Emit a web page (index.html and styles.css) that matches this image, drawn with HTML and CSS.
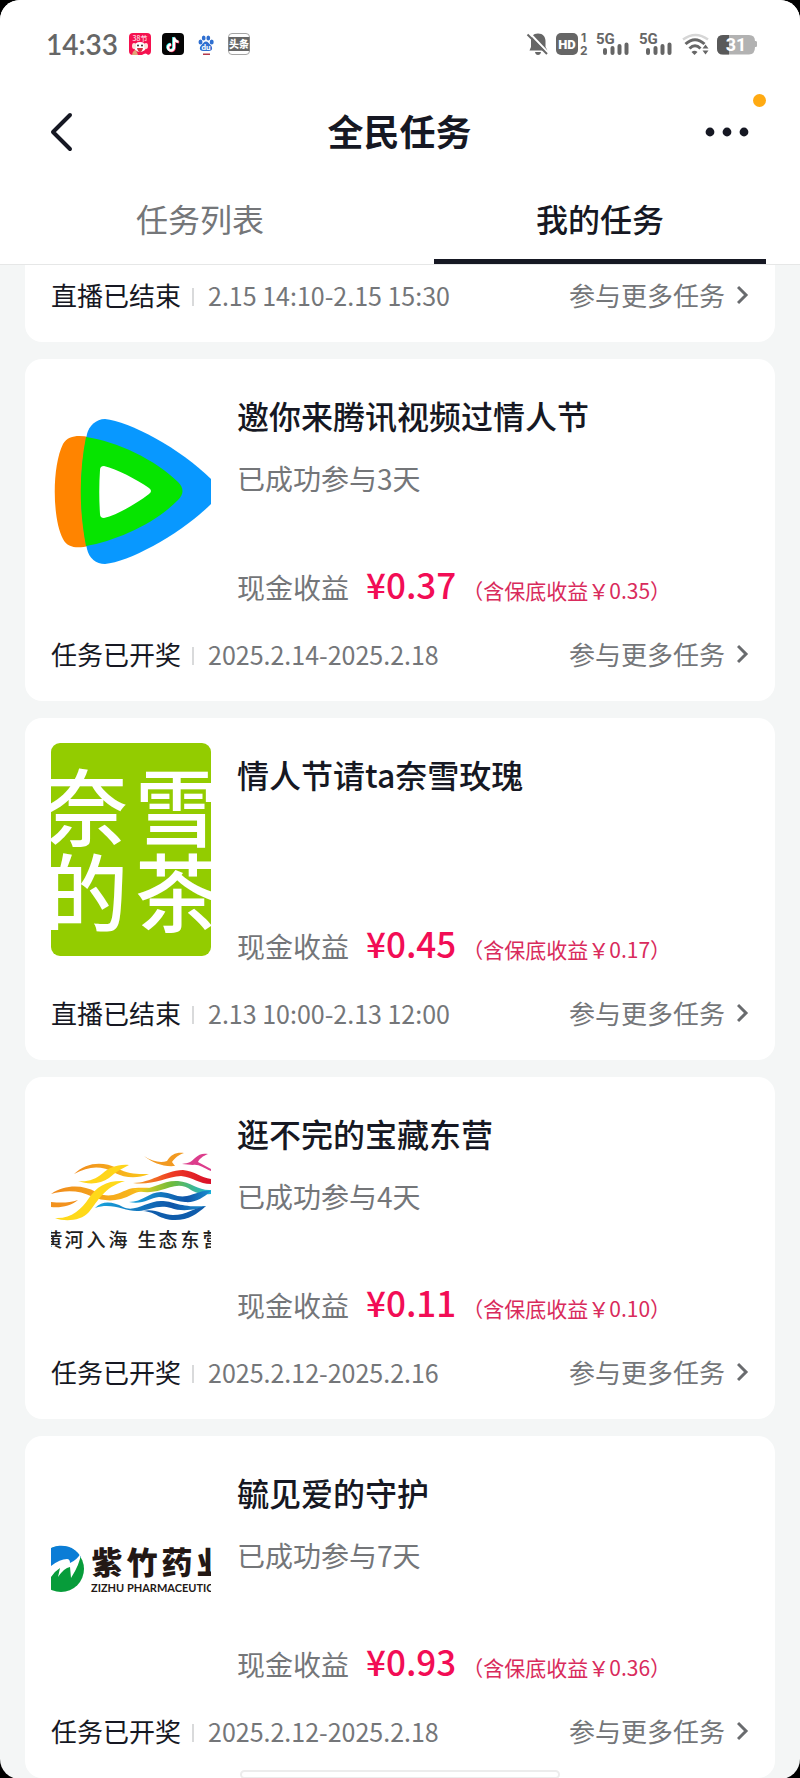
FILE: index.html
```html
<!DOCTYPE html>
<html lang="zh-CN">
<head>
<meta charset="utf-8">
<meta name="viewport" content="width=device-width, initial-scale=1">
<title>全民任务</title>
<link rel="stylesheet" href="styles.css">
</head>
<body>
<div class="screen">
  <header class="header">
    <div class="status">
      <div class="status-left">
        <time class="clock">14:33</time>
        <svg class="app-icon" viewBox="0 0 22 22" aria-hidden="true">
          <rect width="22" height="22" rx="4" fill="#f5114f"/>
          <text x="11" y="8" text-anchor="middle" class="promo-text">38节</text>
          <ellipse cx="11" cy="14" rx="6" ry="5" fill="#fff"/>
          <ellipse cx="5" cy="13" rx="2" ry="3" fill="#fbe3da"/>
          <ellipse cx="17" cy="13" rx="2" ry="3" fill="#fbe3da"/>
          <circle cx="9" cy="12.500" r="0.900" fill="#222"/><circle cx="13" cy="12.500" r="0.900" fill="#222"/>
          <path d="M8 15h6q-1 4-3 4t-3-4z" fill="#d3313c"/>
          <path d="M3 22q1-5 4-5l2 5z" fill="#e0a678"/><path d="M13 22q4-3 6 0z" fill="#fff"/>
        </svg>
        <svg class="app-icon" viewBox="0 0 22 22" aria-hidden="true">
          <rect width="22" height="22" rx="4" fill="#050505"/>
          <g fill="none" stroke-width="2.400">
            <path d="M11.300 4v10a3 3 0 1 1-3-3M11.300 4q.5 4 4.500 4.300" stroke="#25e4e0"/>
            <path d="M12.700 5v10a3 3 0 1 1-3-3M12.700 5q.5 4 4.500 4.300" stroke="#f22b55"/>
            <path d="M12 4.500v10a3 3 0 1 1-3-3M12 4.500q.5 4 4.500 4.300" stroke="#fff"/>
          </g>
        </svg>
        <svg class="app-icon" viewBox="0 0 22 22" aria-hidden="true">
          <g fill="#2f6fd0">
            <ellipse cx="5.500" cy="9" rx="2" ry="2.600"/><ellipse cx="8.700" cy="5" rx="1.900" ry="2.600"/>
            <ellipse cx="13.300" cy="5" rx="1.900" ry="2.600"/><ellipse cx="16.700" cy="9" rx="2" ry="2.600"/>
            <path d="M11 8.500c2 0 3 2 4.500 3.500 3 3 1.500 6-1.500 6H8c-3 0-4.500-3-1.500-6C8 10.500 9 8.500 11 8.500z"/>
          </g>
          <text x="11" y="16.500" text-anchor="middle" class="paw-text">du</text>
          <path d="M8 21.300h7" stroke="#b33a4a" stroke-width="1.400"/>
        </svg>
        <svg class="app-icon" viewBox="0 0 22 22" aria-hidden="true">
          <rect x="0.500" y="0.500" width="21" height="21" rx="3.500" fill="#fff" stroke="#a5a5a5"/>
          <rect x="0.500" y="4" width="21" height="14" fill="#666"/>
          <text x="11" y="15" text-anchor="middle" class="news-text">头条</text>
        </svg>
      </div>
      <div class="status-right">
        <svg class="sys-icon" width="22" height="24" viewBox="0 0 22 24" aria-hidden="true">
          <path d="M12 1.500c5 0 7.500 3.500 7.500 7.500v6l2 3.500H3.500L5 15V9c0-4 2-7.500 7-7.500z" fill="#666"/>
          <path d="M9 20h6q-.5 3-3 3t-3-3z" fill="#666"/>
          <path d="M3 .5l20 21" stroke="#fff" stroke-width="2"/>
          <path d="M1.500 2.500L21 22" stroke="#666" stroke-width="2"/>
        </svg>
        <svg class="sys-icon" width="32" height="24" viewBox="0 0 32 24" aria-hidden="true">
          <rect y="1" width="22" height="22" rx="5" fill="#666"/>
          <text x="11" y="17" text-anchor="middle" class="hd-text">HD</text>
          <text x="25" y="10" class="sim-text">1</text><text x="24" y="23" class="sim-text">2</text>
        </svg>
        <svg class="sys-icon" width="35" height="24" viewBox="0 0 35 24" aria-hidden="true">
          <text x="0" y="12" class="net-text">5G</text>
          <path d="M9 18v3M16.500 16v5M23.500 14v7M30.500 12.500v8.500" class="bars"/>
        </svg>
        <svg class="sys-icon" width="35" height="24" viewBox="0 0 35 24" aria-hidden="true">
          <text x="0" y="12" class="net-text">5G</text>
          <path d="M9 18v3M16.500 16v5M23.500 14v7M30.500 12.500v8.500" class="bars"/>
        </svg>
        <svg class="sys-icon" width="27" height="24" viewBox="0 0 27 24" aria-hidden="true">
          <g fill="none" stroke-width="2.500">
            <path d="M1 7.500q12.500-9 25 0" stroke="#d6d6d6"/>
            <path d="M3.500 12q9.500-8.500 19 0M7.500 16.500q5.500-5.500 11 0" stroke="#666" stroke-width="3"/>
          </g>
          <path d="M9.500 20q3-2.500 6 0l-3 3z" fill="#666"/>
          <path d="M23.500 12.500l3 4h-6zM23.500 22.500l3-4h-6z" fill="#666"/>
        </svg>
        <svg class="sys-icon" width="40" height="24" viewBox="0 0 40 24" aria-hidden="true">
          <path d="M6 3H32q6 0 6 6h1q1 0 1 1.500v3q0 1.500-1 1.500h-1q0 7.500-6 7.500H6q-6 0-6-6V9q0-6 6-6z" fill="#b2b2b2"/>
          <path d="M6 3h6v19.500H6q-6 0-6-6V9q0-6 6-6z" fill="#595959"/>
          <text x="19" y="19" text-anchor="middle" class="battery-text">31</text>
        </svg>
      </div>
    </div>

    <div class="titlebar">
      <button class="icon-button" type="button" aria-label="返回">
        <svg width="24" height="40" viewBox="0 0 24 40" aria-hidden="true"><path d="M20 3L3 20l17 17" fill="none" stroke="#161823" stroke-width="4" stroke-linecap="round" stroke-linejoin="round"/></svg>
      </button>
      <h1 class="page-title">全民任务</h1>
      <button class="icon-button more" type="button" aria-label="更多">
        <svg width="44" height="40" viewBox="0 0 44 40" fill="#161823" aria-hidden="true"><circle cx="5" cy="20" r="4.400"/><circle cx="22" cy="20" r="4.400"/><circle cx="39" cy="20" r="4.400"/></svg>
        <span class="dot"></span>
      </button>
    </div>

    <nav class="tabs">
      <a class="tab" href="#list">任务列表</a>
      <a class="tab active" href="#mine" aria-current="page">我的任务</a>
    </nav>
  </header>

  <main class="cards">
    <article class="card partial">
      <footer class="card-foot">
        <span class="state">直播已结束</span><span class="date">2.15 14:10-2.15 15:30</span>
        <a class="join" href="#more">参与更多任务<svg class="arrow" viewBox="0 0 12 20" aria-hidden="true"><path d="M1 2l8 8-8 8"/></svg></a>
      </footer>
    </article>

    <article class="card">
      <div class="card-body">
        <svg class="cover" viewBox="0 0 160 213" role="img" aria-label="腾讯视频">
          <path d="M38 53C28 51 17 51 12 60C1 82 1 134 12 155C17 165 28 164 38 162z" fill="#ff8400"/>
          <path d="M54 35C45 35 38 42 36 50C28 88 28 126 36 165C38 174 45 180 54 180C78 178 130 150 160 120V95C130 65 78 37 54 35z" fill="#0898ff"/>
          <path d="M35 53C65 57 105 76 127 98C133 104 133 110 127 116C105 139 65 157 35 162C28 126 28 88 35 53z" fill="#06e400"/>
          <path d="M53 82C66 85 85 95 98 104Q102 107 98 110C85 120 66 131 53 134Q49 134 49 130C48 115 48 100 49 86Q49 82 53 82z" fill="#fff"/>
        </svg>
        <div class="info">
          <h2 class="name">邀你来腾讯视频过情人节</h2>
          <p class="days">已成功参与3天</p>
          <p class="income"><span class="label">现金收益</span><strong class="amount">¥0.37</strong><span class="note">（含保底收益￥0.35）</span></p>
        </div>
      </div>
      <footer class="card-foot">
        <span class="state">任务已开奖</span><span class="date">2025.2.14-2025.2.18</span>
        <a class="join" href="#more">参与更多任务<svg class="arrow" viewBox="0 0 12 20" aria-hidden="true"><path d="M1 2l8 8-8 8"/></svg></a>
      </footer>
    </article>

    <article class="card">
      <div class="card-body">
        <svg class="cover" viewBox="0 0 160 213" role="img" aria-label="奈雪的茶">
          <rect width="160" height="213" fill="#93cc00"/>
          <g class="tea-text" text-anchor="middle">
            <text x="35" y="97">奈</text><text x="126" y="97">雪</text>
            <text x="35" y="182">的</text><text x="126" y="182">茶</text>
          </g>
        </svg>
        <div class="info">
          <h2 class="name">情人节请ta奈雪玫瑰</h2>
          <p class="income"><span class="label">现金收益</span><strong class="amount">¥0.45</strong><span class="note">（含保底收益￥0.17）</span></p>
        </div>
      </div>
      <footer class="card-foot">
        <span class="state">直播已结束</span><span class="date">2.13 10:00-2.13 12:00</span>
        <a class="join" href="#more">参与更多任务<svg class="arrow" viewBox="0 0 12 20" aria-hidden="true"><path d="M1 2l8 8-8 8"/></svg></a>
      </footer>
    </article>

    <article class="card">
      <div class="card-body">
        <svg class="cover" viewBox="0 0 160 213" role="img" aria-label="黄河入海 生态东营">
          <defs>
            <linearGradient id="red"><stop offset="0" stop-color="#f6a623"/><stop offset=".5" stop-color="#ee3a24"/><stop offset="1" stop-color="#d80f2a"/></linearGradient>
            <linearGradient id="green"><stop offset="0" stop-color="#ffd21c"/><stop offset=".5" stop-color="#6dbb3c"/><stop offset="1" stop-color="#17b5dc"/></linearGradient>
            <linearGradient id="blue"><stop offset="0" stop-color="#19a5dd"/><stop offset=".7" stop-color="#0f55a8"/><stop offset="1" stop-color="#1b8fd0"/></linearGradient>
            <linearGradient id="gold"><stop offset="0" stop-color="#f08a1d"/><stop offset="1" stop-color="#fbc81b"/></linearGradient>
          </defs>
          <path d="M23 72C35 60 52 59 66 66C78 73 88 72 98 72C86 77 74 76 64 71C50 63 38 64 23 72z" fill="url(#gold)"/>
          <path d="M78 63C66 62 58 66 52 71C44 78 36 80 27 79C38 83 50 82 58 76C65 70 70 67 78 63z" fill="#ffd51a"/>
          <path d="M0 92C15 82 32 83 45 90C58 97 66 92 78 87C90 84 105 88 115 84C100 92 92 87 82 92C66 101 52 99 42 95C28 88 15 88 0 92z" fill="url(#gold)"/>
          <path d="M74 79C56 78 46 84 38 96C30 108 20 117 4 116C14 120 30 119 38 110C48 98 52 86 74 79z" fill="#ffd91a"/>
          <path d="M0 100C10 101 18 101 27 98C20 104 10 106 0 105z" fill="#f2921f"/>
          <path d="M82 81C100 81 112 69 132 68C144 69 150 76 160 77V82C148 82 142 75 130 74C115 75 100 84 82 81z" fill="url(#red)"/>
          <path d="M82 87C100 90 110 78 127 79C140 80 148 89 160 88V92C150 93 146 91 140 88C130 80 120 85 110 88C100 91 90 91 82 87z" fill="url(#green)"/>
          <path d="M78 100C92 100 98 90 110 90C122 91 126 96 136 94C146 92 150 88 160 89C152 96 144 101 134 100C122 99 118 95 108 95C98 96 92 103 78 100z" fill="url(#blue)"/>
          <path d="M44 106C52 98 62 100 72 105C84 111 96 99 110 99C124 99 128 106 155 104C146 108 130 110 120 106C108 102 98 108 88 109C74 110 62 100 44 106z" fill="url(#blue)"/>
          <path d="M92 109C104 106 112 113 122 113C136 113 142 106 155 104C146 112 138 118 124 118C108 118 106 110 92 109z" fill="#0f5cab"/>
          <path d="M93 54C102 60 110 61 116 59C120 52 126 50 133 51C127 53 124 56 121 60L124 64C112 65 102 61 93 54z" fill="#f29a22"/>
          <path d="M131 62C138 61 140 60 144 56C148 52 152 51 157 52C152 54 148 57 147 60L160 67V69C152 66 148 62 142 63z" fill="#dc3d8c"/>
          <text class="river-text" text-anchor="middle"><tspan x="2" y="145">黄</tspan><tspan x="23">河</tspan><tspan x="45">入</tspan><tspan x="67">海</tspan><tspan x="96">生</tspan><tspan x="117">态</tspan><tspan x="139">东</tspan><tspan x="161">营</tspan></text>
        </svg>
        <div class="info">
          <h2 class="name">逛不完的宝藏东营</h2>
          <p class="days">已成功参与4天</p>
          <p class="income"><span class="label">现金收益</span><strong class="amount">¥0.11</strong><span class="note">（含保底收益￥0.10）</span></p>
        </div>
      </div>
      <footer class="card-foot">
        <span class="state">任务已开奖</span><span class="date">2025.2.12-2025.2.16</span>
        <a class="join" href="#more">参与更多任务<svg class="arrow" viewBox="0 0 12 20" aria-hidden="true"><path d="M1 2l8 8-8 8"/></svg></a>
      </footer>
    </article>

    <article class="card">
      <div class="card-body">
        <svg class="cover" viewBox="0 0 160 213" role="img" aria-label="紫竹药业">
          <circle cx="10" cy="108" r="23" fill="#079c3a"/>
          <path d="M0 87A23 23 0 0 1 30 96L18 104 0 106z" fill="#0b7dd6"/>
          <path d="M0 105Q9 98 16 98Q19 98 19 102Q26 99 30 92Q29 103 20 117L19 106Q13 107 7 116L9 107Q4 110 0 116z" fill="#fff"/>
          <text class="pharma-text" text-anchor="middle"><tspan x="56" y="113">紫</tspan><tspan x="91">竹</tspan><tspan x="126">药</tspan><tspan x="161">业</tspan></text>
          <text class="pharma-latin" x="40" y="131">ZIZHU PHARMACEUTICAL</text>
        </svg>
        <div class="info">
          <h2 class="name">毓见爱的守护</h2>
          <p class="days">已成功参与7天</p>
          <p class="income"><span class="label">现金收益</span><strong class="amount">¥0.93</strong><span class="note">（含保底收益￥0.36）</span></p>
        </div>
      </div>
      <footer class="card-foot">
        <span class="state">任务已开奖</span><span class="date">2025.2.12-2025.2.18</span>
        <a class="join" href="#more">参与更多任务<svg class="arrow" viewBox="0 0 12 20" aria-hidden="true"><path d="M1 2l8 8-8 8"/></svg></a>
      </footer>
    </article>
  </main>
  <div class="home-bar"></div>
</div>
</body>
</html>
```
FILE: styles.css
```css
* { box-sizing: border-box; }

body {
  margin: 0;
  background: #000;
  color: #161823;
  font-family: "Noto Sans CJK SC", sans-serif;
}

h1, h2, p { margin: 0; }
a { color: inherit; text-decoration: none; }

.screen {
  position: relative;
  min-height: 100vh;
  overflow: hidden;
  border-radius: 20px;
  background: #f4f6f6;
}

.header {
  background: #fff;
  border-bottom: 1px solid #e6e7e7;
}

/* Status bar */
.status {
  display: flex;
  justify-content: space-between;
  align-items: center;
  height: 88px;
  padding: 0 43px 0 46px;
  color: #666;
}
.status-left { display: flex; align-items: center; gap: 11px; }
.status-right { display: flex; align-items: center; gap: 8px; }
.clock {
  min-width: 72px;
  font-family: Lato, sans-serif;
  font-size: 28px;
  font-weight: 600;
  line-height: 32px;
}
.app-icon { width: 22px; height: 22px; }
.sys-icon { overflow: visible; }
.promo-text { font-size: 7px; fill: #fff; }
.paw-text { font: bold 8px Roboto, sans-serif; fill: #fff; }
.news-text { font-size: 10px; font-weight: 900; fill: #fff; }
.hd-text { font: 900 13px Roboto, sans-serif; fill: #fff; }
.sim-text { font: 700 12px Inter, sans-serif; fill: #666; }
.net-text { font: 700 15px Roboto, sans-serif; fill: #666; }
.bars { stroke: #666; stroke-width: 4; stroke-linecap: round; }
.battery-text { font: 700 18px Roboto, sans-serif; fill: #fff; }

/* Title bar */
.titlebar {
  display: flex;
  justify-content: space-between;
  align-items: center;
  height: 88px;
  padding: 0 51px 0 50px;
}
.icon-button {
  position: relative;
  display: flex;
  width: 44px;
  padding: 0;
  border: 0;
  background: none;
}
.page-title {
  padding-bottom: 4px;
  font-size: 36px;
  font-weight: 700;
  line-height: 48px;
}
.dot {
  position: absolute;
  top: -18px;
  right: -17px;
  width: 13px;
  height: 13px;
  border-radius: 50%;
  background: #ffaa12;
}

/* Tabs */
.tabs { display: grid; grid-template-columns: 1fr 1fr; }
.tab {
  margin: 0 34px;
  padding: 18px 0 17px;
  border-bottom: 5px solid transparent;
  color: #747679;
  font-size: 32px;
  line-height: 48px;
  text-align: center;
}
.tab.active {
  border-color: #161823;
  color: #161823;
  font-weight: 500;
}

/* Task cards */
.cards {
  display: flex;
  flex-direction: column;
  gap: 17px;
  padding: 0 25px 1px;
}
.card {
  padding: 25px 26px 28px;
  border-radius: 17px;
  background: #fff;
}
.card.partial { padding-top: 0; border-radius: 0 0 17px 17px; }
.card-body { display: flex; gap: 26px; }
.cover {
  flex: none;
  width: 160px;
  height: 213px;
  margin-bottom: 9px;
  overflow: hidden;
  border-radius: 9px;
}
.tea-text { font-size: 84px; font-weight: 500; fill: #fff; }
.river-text { font-size: 19px; font-weight: 500; fill: #222; }
.pharma-text { font-size: 31px; font-weight: 900; fill: #231815; }
.pharma-latin { font: 700 11px Lato, sans-serif; fill: #231815; }

.info { display: flex; flex: 1; flex-direction: column; padding-top: 7px; }
.name { font-size: 32px; font-weight: 500; line-height: 48px; }
.days { margin-top: 19px; color: #747679; font-size: 28px; line-height: 40px; }
.income {
  display: flex;
  align-items: baseline;
  margin-top: auto;
  line-height: 32px;
}
.label { color: #747679; font-size: 28px; }
.amount { margin-left: 17px; color: #f20d55; font-size: 35px; font-weight: 500; }
.note { margin-left: 6px; color: #d92b5c; font-size: 21px; }

.card-foot {
  display: flex;
  align-items: center;
  margin-top: 29px;
  font-size: 26px;
  line-height: 38px;
}
.partial .card-foot { margin-top: 11px; }
.state::after {
  content: "";
  display: inline-block;
  width: 2px;
  height: 18px;
  margin: 0 14px 0 11px;
  background: #d9dadb;
}
.date { color: #747679; font-size: 25px; }
.join {
  display: flex;
  align-items: center;
  gap: 12px;
  margin-left: auto;
  color: #747679;
}
.arrow { width: 12px; height: 20px; }
.arrow path { fill: none; stroke: #696b6e; stroke-width: 3; }

.home-bar {
  position: absolute;
  bottom: 0;
  left: 50%;
  width: 40%;
  height: 9px;
  margin-left: -20%;
  border: 2px solid #ececec;
  border-radius: 5px;
  background: #fff;
}
```
